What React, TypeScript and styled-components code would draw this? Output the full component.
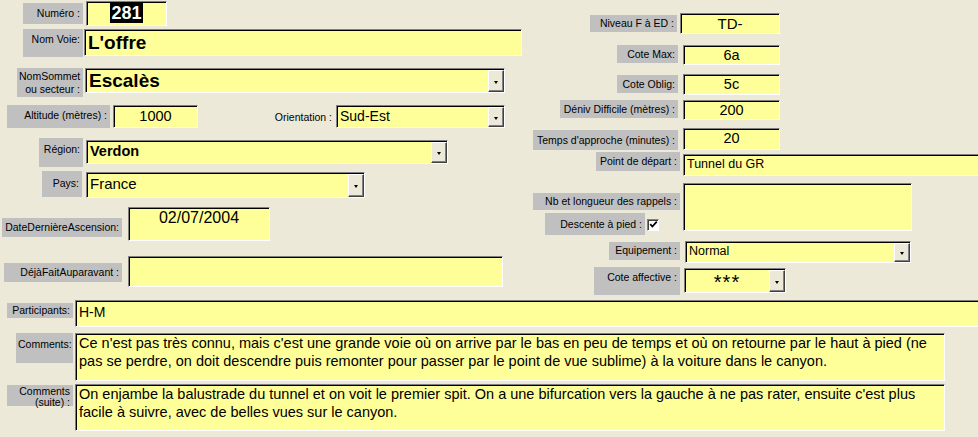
import React from 'react';
import styled, { createGlobalStyle } from 'styled-components';

const GlobalStyle = createGlobalStyle`
  html, body {
    margin: 0;
    padding: 0;
    background: #ece9d8;
  }
`;

const Page = styled.div`
  width: 978px;
  height: 437px;
  background: #ece9d8;
  overflow: hidden;
  font-family: 'Liberation Sans', Arial, sans-serif;
  color: #000;
`;

const Top = styled.div`
  display: flex;
  height: 300px;
`;

const LeftCol = styled.div`
  flex: none;
  width: 530px;
  display: flex;
  flex-direction: column;
`;

const RightCol = styled.div`
  flex: none;
  width: 448px;
  display: flex;
  flex-direction: column;
`;

const Row = styled.div<{ $h: number }>`
  flex: none;
  display: flex;
  align-items: flex-start;
  height: ${({ $h }) => $h}px;
`;

type BoxProps = {
  $w: number;
  $h: number;
  $ml?: number;
  $dy?: number;
};

const Label = styled.div<BoxProps & { $pt?: number; $lh?: number }>`
  flex: none;
  box-sizing: border-box;
  width: ${({ $w }) => $w}px;
  height: ${({ $h }) => $h}px;
  margin-left: ${({ $ml = 0 }) => $ml}px;
  margin-top: ${({ $dy = 0 }) => $dy}px;
  padding: ${({ $h, $pt }) => $pt ?? ($h <= 22 ? ($h - 13) / 2 : 4)}px 3px 0 2px;
  background: #c0c0c0;
  text-align: right;
  font-size: 10.5px;
  line-height: ${({ $lh = 13 }) => $lh}px;
  white-space: nowrap;
`;

const PlainLabel = styled.div<{ $w: number; $ml: number; $dy: number }>`
  flex: none;
  width: ${({ $w }) => $w}px;
  margin-left: ${({ $ml }) => $ml}px;
  margin-top: ${({ $dy }) => $dy}px;
  box-sizing: border-box;
  padding-right: 4px;
  text-align: right;
  font-size: 10.5px;
  line-height: 13px;
  white-space: nowrap;
`;

const Field = styled.div<
  BoxProps & { $size?: number; $bold?: boolean; $center?: boolean; $lh?: number; $pt?: number }
>`
  flex: none;
  box-sizing: border-box;
  width: ${({ $w }) => $w}px;
  height: ${({ $h }) => $h}px;
  margin-left: ${({ $ml = 0 }) => $ml}px;
  margin-top: ${({ $dy = 0 }) => $dy}px;
  padding: ${({ $pt = 0 }) => $pt}px 3px 0 3px;
  background: #ffff99;
  border-style: solid;
  border-width: 1px;
  border-color: #808080 #ffffff #ffffff #808080;
  box-shadow: inset 1px 1px 0 #000;
  font-size: ${({ $size = 14 }) => $size}px;
  font-weight: ${({ $bold }) => ($bold ? 700 : 400)};
  text-align: ${({ $center }) => ($center ? 'center' : 'left')};
  line-height: ${({ $lh }) => ($lh ? `${$lh}px` : '1.2')};
  overflow: hidden;
`;

const Combo = styled(Field)`
  display: flex;
  padding: 0;
`;

const ComboText = styled.div<{ $pt?: number; $spacing?: number }>`
  flex: 1;
  min-width: 0;
  padding: ${({ $pt = 1 }) => $pt}px 3px 0 3px;
  letter-spacing: ${({ $spacing = 0 }) => $spacing}px;
  white-space: nowrap;
  overflow: hidden;
`;

const DropButton = styled.div`
  flex: none;
  width: 16px;
  align-self: stretch;
  box-sizing: border-box;
  margin: 1px 0 0 0;
  background: #ece9d8;
  border-style: solid;
  border-width: 1px;
  border-color: #ffffff #404040 #404040 #ffffff;
  box-shadow: inset -1px -1px 0 #808080;
  display: flex;
  align-items: center;
  justify-content: center;

  &::after {
    content: '';
    display: block;
    margin-top: 2px;
    border-style: solid;
    border-width: 3px 2.5px 0 2.5px;
    border-color: #000 transparent transparent transparent;
  }
`;

const Selected = styled.span`
  background: #000;
  color: #fff;
  padding: 0 1px;
`;

const LabelStack = styled.div<{ $ml: number; $w: number }>`
  flex: none;
  width: ${({ $w }) => $w}px;
  margin-left: ${({ $ml }) => $ml}px;
  display: flex;
  flex-direction: column;
`;

const CheckRow = styled.div`
  display: flex;
  align-items: center;
  margin: 3px 0 0 12px;
`;

const CheckBox = styled.div`
  flex: none;
  box-sizing: border-box;
  width: 12px;
  height: 12px;
  margin-left: 2px;
  margin-top: 1px;
  background: #ffffff;
  border-style: solid;
  border-width: 1px;
  border-color: #808080 #ffffff #ffffff #808080;
  box-shadow: inset 1px 1px 0 #404040;
  display: flex;
  align-items: center;
  justify-content: center;
`;

const Memo = styled(Field)`
  white-space: normal;
`;

const Check = () => (
  <svg width="9" height="9" viewBox="0 0 9 9">
    <path d="M1.2 4.2 L3.4 6.5 L7.8 1.6" fill="none" stroke="#000" strokeWidth="1.8" />
  </svg>
);

export default function App() {
  return (
    <Page>
      <GlobalStyle />
      <Top>
        <LeftCol>
          <Row $h={28}>
            <Label $ml={23} $w={60} $h={21} $dy={3}>
              Numéro :
            </Label>
            <Field $ml={3} $w={81} $h={25} $dy={1} $size={18} $bold $center $lh={21} $pt={1}>
              <Selected>281</Selected>
            </Field>
          </Row>
          <Row $h={38}>
            <Label $ml={23} $w={60} $h={28} $dy={1}>
              Nom Voie:
            </Label>
            <Field $ml={1} $w={438} $h={27} $dy={1} $size={19} $bold $lh={23} $pt={1}>
              L'offre
            </Field>
          </Row>
          <Row $h={37}>
            <Label $ml={17} $w={66} $h={29} $dy={2} $pt={2}>
              NomSommet
              <br />
              ou secteur :
            </Label>
            <Combo $ml={2} $w={420} $h={25} $dy={2} $size={19} $bold $lh={22}>
              <ComboText>Escalès</ComboText>
              <DropButton />
            </Combo>
          </Row>
          <Row $h={34}>
            <Label $ml={7} $w={103} $h={23} $dy={2}>
              Altitude (mètres) :
            </Label>
            <Field $ml={3} $w={85} $h={23} $dy={2} $size={14.5} $center $lh={20}>
              1000
            </Field>
            <PlainLabel $ml={70} $w={68} $dy={8}>
              Orientation :
            </PlainLabel>
            <Combo $w={169} $h={23} $dy={2} $size={14} $lh={19}>
              <ComboText>Sud-Est</ComboText>
              <DropButton />
            </Combo>
          </Row>
          <Row $h={33}>
            <Label $ml={39} $w={44} $h={29} $dy={1} $pt={5}>
              Région:
            </Label>
            <Combo $ml={3} $w={362} $h={24} $dy={3} $size={14.5} $bold $lh={19}>
              <ComboText>Verdon</ComboText>
              <DropButton />
            </Combo>
          </Row>
          <Row $h={35}>
            <Label $ml={42} $w={40} $h={26} $dy={1} $pt={6}>
              Pays:
            </Label>
            <Combo $ml={4} $w={279} $h={26} $dy={2} $size={15} $lh={19}>
              <ComboText>France</ComboText>
              <DropButton />
            </Combo>
          </Row>
          <Row $h={50}>
            <Label $ml={2} $w={120} $h={19} $dy={13}>
              DateDernièreAscension:
            </Label>
            <Field $ml={6} $w={142} $h={34} $dy={2} $size={16} $center $lh={20}>
              02/07/2004
            </Field>
          </Row>
          <Row $h={45}>
            <Label $ml={4} $w={118} $h={19} $dy={8}>
              DéjàFaitAuparavant :
            </Label>
            <Field $ml={6} $w={375} $h={31} $dy={1} />
          </Row>
        </LeftCol>

        <RightCol>
          <Row $h={40}>
            <Label $ml={60} $w={87} $h={17} $dy={15}>
              Niveau F à ED :
            </Label>
            <Field $ml={3} $w={100} $h={21} $dy={13} $size={15} $center $lh={19}>
              TD-
            </Field>
          </Row>
          <Row $h={32}>
            <Label $ml={87} $w={61} $h={18} $dy={5}>
              Cote Max:
            </Label>
            <Field $ml={5} $w={97} $h={20} $dy={5} $size={14.5} $center $lh={19}>
              6a
            </Field>
          </Row>
          <Row $h={27}>
            <Label $ml={87} $w={61} $h={18} $dy={3}>
              Cote Oblig:
            </Label>
            <Field $ml={5} $w={97} $h={21} $dy={2} $size={14.5} $center $lh={19}>
              5c
            </Field>
          </Row>
          <Row $h={28}>
            <Label $ml={30} $w={118} $h={18} $dy={1}>
              Déniv Difficile (mètres) :
            </Label>
            <Field $ml={5} $w={97} $h={20} $dy={1} $size={14.5} $center $lh={19}>
              200
            </Field>
          </Row>
          <Row $h={22}>
            <Label $ml={3} $w={145} $h={20} $dy={3}>
              Temps d'approche (minutes) :
            </Label>
            <Field $ml={5} $w={97} $h={22} $dy={1} $size={14.5} $center $lh={19}>
              20
            </Field>
          </Row>
          <Row $h={31}>
            <Label $ml={66} $w={84} $h={19} $dy={3}>
              Point de départ :
            </Label>
            <Field $ml={3} $w={300} $h={22} $dy={5} $size={12.5} $lh={18}>
              Tunnel du GR
            </Field>
          </Row>
          <Row $h={58}>
            <LabelStack $ml={3} $w={147}>
              <Label $w={147} $h={17} $dy={13}>
                Nb et longueur des rappels :
              </Label>
              <CheckRow>
                <Label $w={100} $h={22} $pt={5}>
                  Descente à pied :
                </Label>
                <CheckBox>
                  <Check />
                </CheckBox>
              </CheckRow>
            </LabelStack>
            <Field $ml={3} $w={229} $h={48} $dy={3} />
          </Row>
          <Row $h={27}>
            <Label $ml={79} $w={71} $h={18} $dy={4} $pt={2}>
              Equipement :
            </Label>
            <Combo $ml={5} $w={226} $h={22} $dy={3} $size={12.5} $lh={17}>
              <ComboText>Normal</ComboText>
              <DropButton />
            </Combo>
          </Row>
          <Row $h={35}>
            <Label $ml={64} $w={86} $h={28} $dy={2} $pt={4}>
              Cote affective :
            </Label>
            <Combo $ml={4} $w={102} $h={25} $dy={3} $size={20} $center $lh={22}>
              <ComboText $pt={2} $spacing={1}>
                ***
              </ComboText>
              <DropButton />
            </Combo>
          </Row>
        </RightCol>
      </Top>

      <Row $h={31}>
        <Label $ml={7} $w={66} $h={15} $dy={3} $pt={1}>
          Participants:
        </Label>
        <Field $ml={2} $w={910} $h={27} $size={14} $lh={20} $pt={1}>
          H-M
        </Field>
      </Row>
      <Row $h={52}>
        <Label $ml={16} $w={57} $h={30} $dy={2} $pt={5}>
          Comments:
        </Label>
        <Memo $ml={2} $w={870} $h={48} $dy={2} $size={14.5} $lh={18}>
          Ce n'est pas très connu, mais c'est une grande voie où on arrive par le bas en peu de temps et où on retourne par le
          haut à pied (ne pas se perdre, on doit descendre puis remonter pour passer par le point de vue sublime) à la voiture
          dans le canyon.
        </Memo>
      </Row>
      <Row $h={54}>
        <Label $ml={7} $w={66} $h={21} $dy={2} $pt={1} $lh={11}>
          Comments
          <br />
          (suite) :
        </Label>
        <Memo $ml={2} $w={870} $h={47} $dy={1} $size={14.5} $lh={18}>
          On enjambe la balustrade du tunnel et on voit le premier spit. On a une bifurcation vers la gauche à ne pas rater,
          ensuite c'est plus facile à suivre, avec de belles vues sur le canyon.
        </Memo>
      </Row>
    </Page>
  );
}
